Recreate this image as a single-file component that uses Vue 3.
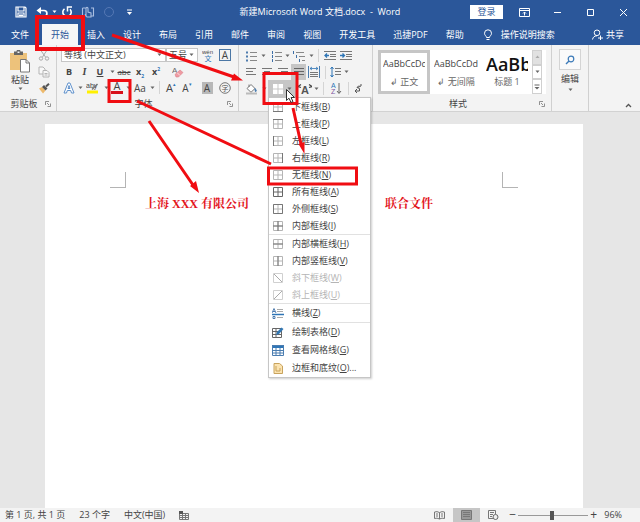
<script setup>
import { h, ref } from 'vue'

const art = {
  save: [12, 12, '<path d="M1 1h9l1 1v9H1zM3 1v4h6V1M3 11V7h6v4" fill="none" stroke="#fff" stroke-width="1.2"/><path d="M4 8.500h4v2H4z" fill="#fff"/>'],
  undo: [12, 12, '<path d="M2 4.500h6a2.800 2.800 0 0 1 0 5.800H6.500" fill="none" stroke="#fff" stroke-width="1.700"/><path d="M0.500 4.500L5 1v7z" fill="#fff"/>'],
  redo: [12, 12, '<path d="M3.500 2.800A4.200 4.200 0 1 0 9 3.200" fill="none" stroke="#fff" stroke-width="1.600"/><path d="M6.500 5.500V1H11" fill="none" stroke="#fff" stroke-width="1.500"/>'],
  touch: [14, 14, '<path d="M1.500 3v8h3M1.500 3h3M10 3h2.500v8H10M5 10V3.500c0-1.500 2-1.500 2 0V7l3 1v4H6L4 9" fill="none" stroke="#a9bee0" stroke-width="1.100"/>'],
  circle: [12, 12, '<circle cx="6" cy="6" r="4.500" fill="none" stroke="#5578b4"/>'],
  qat: [7, 7, '<path d="M1 1h5" stroke="#fff"/><path d="M1 3h5L3.500 6z" fill="#fff"/>'],
  ropts: [11, 9, '<path d="M.5.5h10v8H.5zM.5 2.500h10M5.500 7.500V4M4 5.500L5.500 4 7 5.500" fill="none" stroke="#fff"/>'],
  min: [9, 9, '<path d="M1 4.500h7" stroke="#fff"/>'],
  max: [9, 9, '<path d="M1.500 1.500h6v6h-6z" fill="none" stroke="#fff"/>'],
  close: [9, 9, '<path d="M1 1l7 7M8 1L1 8" stroke="#fff"/>'],
  bulb: [10, 12, '<path d="M3.500 8.500C3.500 7 1.500 6.500 1.500 4.300a3.500 3.500 0 0 1 7 0C8.500 6.500 6.500 7 6.500 8.500zM3.500 10.500h3" fill="none" stroke="#fff"/>'],
  share: [11, 11, '<circle cx="5" cy="3.800" r="2.800" fill="none" stroke="#fff"/><path d="M.5 10.500C1 8 2.500 6.800 5 6.800M6 9h5M8.500 6.500v5" fill="none" stroke="#fff"/>'],
  caret: [5, 4, '<path d="M.5.5h4L2.500 3z" fill="#666"/>'],
  caretw: [5, 4, '<path d="M.5.5h4L2.500 3z" fill="#fff"/>'],
  paste: [22, 23, '<path d="M1 3h17v17H1z" fill="#edc27b"/><path d="M5 1.500h2.500a2 2 0 0 1 4 0H14V5H5z" fill="#666"/><path d="M8.500 1.500h2v1.500h-2z" fill="#f3f3f3"/><path d="M11.500 9.500h5.500l3.500 3.500v9h-9z" fill="#fff" stroke="#777"/><path d="M17 9.500V13h3.500" fill="none" stroke="#777"/>'],
  cut: [12, 11, '<path d="M2.500 0l5 7M9 0L4.500 7" stroke="#aaa" fill="none"/><circle cx="3" cy="8.500" r="1.700" fill="none" stroke="#aaa"/><circle cx="9" cy="8.500" r="1.700" fill="none" stroke="#aaa"/>'],
  copy: [12, 12, '<path d="M1 1h4l2 2v5H1z" fill="#f8f8f8" stroke="#b4b4b4"/><path d="M5 4.500h4l2 2V11H5zM6.500 7.500h3M6.500 9h3" fill="#f8f8f8" stroke="#b4b4b4"/>'],
  brush: [12, 11, '<path d="M1 5.500l3-1.500 3.500 3.500L5 10.500z" fill="#edb96c"/><path d="M4 4l2-2 3.500 3.500-2 2z" fill="#555"/><path d="M8 3.500L11 .8" stroke="#555" stroke-width="2"/>'],
  launcher: [6, 6, '<path d="M.5 4V.5H4M2 2l2 2M5.500 2.500v3h-3" fill="none" stroke="#777" stroke-width=".8"/>'],
  wen: [12, 13, '<text x="0" y="5" font-size="6" font-family="Liberation Sans" fill="#444">wén</text><text x="2.500" y="12" font-size="7" font-family="Noto Sans CJK SC" fill="#2e75b6">文</text>'],
  eraser: [12, 12, '<text x="0" y="7" font-size="8" font-family="Liberation Sans" fill="#666">A</text><path d="M3 8.500L8 4l3 2.500-4.500 4.500H4z" fill="#ef9aa2" stroke="#d9808a" stroke-width=".6"/><path d="M5 6.500l3 3" stroke="#fff" stroke-width=".7"/>'],
  clearA: [12, 12, '<path d="M1 11L5 1h2l4 10H8.500L7.700 8.500H4.300L3.500 11zM5 6.500h2L6 3.500z" fill="#fff" stroke="#4f86c6" stroke-width=".9"/>'],
  marker: [14, 13, '<path d="M1 9.500h11v3H1z" fill="#fff000"/><text x="0" y="7" font-size="7" font-family="Liberation Sans" fill="#444">aby</text><path d="M6 8.500L11.500 3" stroke="#777" stroke-width="1.500"/>'],
  ring: [12, 12, '<circle cx="6" cy="6" r="5.300" fill="none" stroke="#777"/><text x="2.500" y="8.700" font-size="7" font-family="Noto Sans CJK SC" fill="#555">字</text>'],
  bullets: [11, 12, '<path d="M4 2.500h7M4 6.500h7M4 10.500h7" stroke="#888"/><path d="M0 1.500h2v2H0zM0 5.500h2v2H0zM0 9.500h2v2H0z" fill="#4f7cae"/>'],
  numbers: [11, 12, '<path d="M4 2.500h7M4 6.500h7M4 10.500h7" stroke="#888"/><path d="M1.500 1v3M1.500 5v3M1.500 9v3" stroke="#3d6fa8"/>'],
  multi: [12, 12, '<path d="M3 2.500h8M6 6.500h6M9 10.500h3" stroke="#888"/><path d="M.5 1v3M3.500 5v3M6.500 9v3" stroke="#3d6fa8"/>'],
  outdent: [12, 11, '<path d="M0 1.500h12M6 4.500h6M6 6.500h6M0 9.500h12" stroke="#777"/><path d="M5 5.500H1M3 3.500l-2 2 2 2" fill="none" stroke="#2e75b6" stroke-width="1.300"/>'],
  indent: [12, 11, '<path d="M0 1.500h12M6 4.500h6M6 6.500h6M0 9.500h12" stroke="#777"/><path d="M0 5.500h4.500M2.500 3.500l2 2-2 2" fill="none" stroke="#2e75b6" stroke-width="1.300"/>'],
  left: [10, 10, '<path d="M0 1.500h10M0 4.500h7M0 7.500h10" stroke="#777"/>'],
  center: [10, 10, '<path d="M0 1.500h10M2 4.500h6M0 7.500h10" stroke="#777"/>'],
  right: [10, 10, '<path d="M0 1.500h10M3 4.500h7M0 7.500h10" stroke="#777"/>'],
  justify: [10, 10, '<path d="M0 1.500h10M0 4.500h10M0 7.500h10" stroke="#666"/>'],
  spread: [12, 12, '<path d="M.5 0v12M11.500 0v12" stroke="#4b7db0"/><path d="M2 2.500h8M4 1L2 2.500 4 4M8 1l2 1.500L8 4" fill="none" stroke="#2e75b6" stroke-width=".8"/><path d="M2 6.500h8M2 8.500h8M2 10.500h8" stroke="#777"/>'],
  spacing: [11, 12, '<path d="M5 2.500h6M5 5.500h6M5 8.500h6" stroke="#777"/><path d="M2 1v10M.5 3L2 1l1.500 2M.5 9L2 11l1.500-2" fill="none" stroke="#2e75b6"/>'],
  bucket: [13, 12, '<path d="M2 5.500L6 1.500l4 4-4 3.800z" fill="#fff" stroke="#777"/><path d="M4 4V1.500" stroke="#777"/><path d="M10 5.500q2 2 1 3t-1-3z" fill="#2e75b6" stroke="#4b7db0"/><path d="M1 10.500h11" stroke="#bbb" stroke-width="2"/>'],
  tblw: [10, 10, '<path d="M0 0h4.500v4.500H0zM5.500 0H10v4.500H5.500zM0 5.500h4.500V10H0zM5.500 5.500H10V10H5.500z" fill="#fff"/>'],
  cross: [14, 12, '<path d="M0 3.500l3-2M0 3.500l3 1M14 3.500l-3-2M14 3.500l-3 1" stroke="#444" stroke-width="1.200"/><text x="3" y="11" font-size="11" font-weight="bold" font-family="Liberation Sans" fill="#555">A</text>'],
  sort: [11, 13, '<text x="0" y="6" font-size="7" font-family="Liberation Sans" fill="#2e75b6">A</text><text x="0" y="12" font-size="7" font-family="Liberation Sans" fill="#8054a0">Z</text><path d="M8 1v10M6 9l2 2.500L10 9" fill="none" stroke="#666"/>'],
  marks: [8, 11, '<path d="M7 1v2L3.500 4.500M5 2.500L3 4.500 5.500 5.500M5.500 5.500v2.500H1M3 6L1 8l2 2" fill="none" stroke="#555"/>'],
  find: [10, 10, '<circle cx="6" cy="4" r="2.800" fill="none" stroke="#3c7ab8" stroke-width="1.200"/><path d="M4 6L1 9" stroke="#3c7ab8" stroke-width="1.400"/>'],
  up: [7, 5, '<path d="M1 4l2.500-2.500L6 4" fill="none" stroke="#555" stroke-width="1.300"/>'],
  upfaint: [5, 4, '<path d="M.5 3h4L2.500.5z" fill="#aaa"/>'],
  more: [6, 6, '<path d="M.5 1h5" stroke="#666"/><path d="M.5 3h5L3 5.500z" fill="#666"/>'],
  count: [10, 9, '<path d="M.5 2.500h9v6h-9zM1 4.500h8M1 6.500h8M3.500 3v5M6.500 3v5" fill="none" stroke="#777"/><path d="M0 0h4v3H0z" fill="#555"/>'],
  read: [11, 9, '<path d="M.5 1q2.500-1 5 .5Q8 0 10.500 1v6.500q-2.500-1-5 .5-2.500-1.500-5-.5zM5.500 1.500V8M2 3h2M2 5h2M7 3h2M7 5h2" fill="none" stroke="#777"/>'],
  print: [11, 10, '<path d="M.5.5h10v9H.5z" fill="#999" stroke="#777"/><path d="M2 2.500h7M2 4.500h7M2 6.500h7" stroke="#777"/>'],
  web: [11, 10, '<path d="M5 8.500H.5v-8h7V4M2 2.500h4M2 4.500h3M2 6.500h2" fill="none" stroke="#777"/><circle cx="7.500" cy="7" r="2.500" fill="#eee" stroke="#666"/>'],
}

// border icons: light grid with the affected edges drawn darker
const grid = (dark, base = '#b5b5b5') => [10, 10, `<path d="M.5.500h9v9h-9zM5 .5v9M.5 5h9" fill="none" stroke="${base}"/><path d="${dark}" fill="none" stroke="#777"/>`]
Object.assign(art, {
  b: grid('M0 9.500h10'), t: grid('M0 .5h10'), l: grid('M.5 0v10'), r: grid('M9.500 0v10'),
  n: grid(''), a: grid('', '#666'), o: grid('M.5.500h9v9h-9z'), i: grid('M5 0v10M0 5h10'),
  h: grid('M0 5h10'), v: grid('M5 0v10'),
  dd: [10, 10, '<path d="M.5.500h9v9h-9z" fill="none" stroke="#d0d0d0"/><path d="M1 1l8 8" stroke="#aaa"/>'],
  du: [10, 10, '<path d="M.5.500h9v9h-9z" fill="none" stroke="#d0d0d0"/><path d="M9 1L1 9" stroke="#aaa"/>'],
  rule: [12, 11, '<path d="M5 1.500h6M5 3.500h6M5 9.500h6" stroke="#aaa"/><path d="M0 6.500h12" stroke="#2e75b6" stroke-width="1.500"/><path d="M0 5l2-4.500L4 5M1 3.500h2M1 8.500h2v2H1z" fill="none" stroke="#3d6fa8" stroke-width=".9"/>'],
  draw: [12, 11, '<path d="M.5 1.500h9v9h-9zM.5 4.500h9M4 1.500v9M.5 7.500h9" fill="none" stroke="#666"/><path d="M4 8l1-3L9.500.5 11.500 2 7 7z" fill="#3278b5"/>'],
  view: [12, 11, '<path d="M0 0h12v3H0z" fill="#2e75b6"/><path d="M.5.500h11v10H.5zM4 3v8M8 3v8M1 5.500h10M1 8h10" fill="none" stroke="#4b7db0"/>'],
  shade: [10, 11, '<path d="M1 .5h5.500L9.500 3v7.500H1z" fill="#fbe3b0" stroke="#c8a35d"/><path d="M3 3v5h4V5" fill="none" stroke="#c8a35d"/>'],
})

const Icon = ({ name }) => {
  const [w, t, body] = art[name]
  return h('svg', { width: w, height: t, viewBox: `0 0 ${w} ${t}`, 'aria-hidden': 'true', innerHTML: body })
}

const tabs = ['文件', '开始', '插入', '设计', '布局', '引用', '邮件', '审阅', '视图', '开发工具', '迅捷PDF', '帮助']
const active = ref('开始')
const zoom = ref(48)

const menu = [
  [['b', '下框线', 'B'], ['t', '上框线', 'P'], ['l', '左框线', 'L'], ['r', '右框线', 'R'], ['n', '无框线', 'N'], ['a', '所有框线', 'A'], ['o', '外侧框线', 'S'], ['i', '内部框线', 'I']],
  [['h', '内部横框线', 'H'], ['v', '内部竖框线', 'V'], ['dd', '斜下框线', 'W'], ['du', '斜上框线', 'U']],
  [['rule', '横线', 'Z']],
  [['draw', '绘制表格', 'D'], ['view', '查看网格线', 'G'], ['shade', '边框和底纹', 'O', '...']],
]
</script>

<template>
  <div class="window">
    <header class="titlebar">
      <div class="quick">
        <button aria-label="保存"><Icon name="save" /></button>
        <button aria-label="撤销"><Icon name="undo" /></button>
        <button class="slim" aria-label="撤销选项"><Icon name="caretw" /></button>
        <button aria-label="重复"><Icon name="redo" /></button>
        <button aria-label="触摸"><Icon name="touch" /></button>
        <button aria-label="录制"><Icon name="circle" /></button>
        <button aria-label="自定义"><Icon name="qat" /></button>
      </div>
      <h1>新建Microsoft Word 文档.docx&nbsp; -&nbsp; Word</h1>
      <div class="controls">
        <button class="login">登录</button>
        <button class="win" aria-label="功能区选项"><Icon name="ropts" /></button>
        <button class="win" aria-label="最小化"><Icon name="min" /></button>
        <button class="win" aria-label="最大化"><Icon name="max" /></button>
        <button class="win" aria-label="关闭"><Icon name="close" /></button>
      </div>
    </header>

    <nav class="tabs">
      <button v-for="t in tabs" :key="t" class="tab" :class="{ on: t === active }" @click="active = t">{{ t }}</button>
      <button class="tell"><Icon name="bulb" />操作说明搜索</button>
      <button class="share"><Icon name="share" />共享</button>
    </nav>

    <section class="ribbon">
      <div class="group clipboard">
        <div class="clip">
          <button class="paste"><Icon name="paste" /><span>粘贴</span><Icon name="caret" /></button>
          <div class="clipside">
            <button aria-label="剪切"><Icon name="cut" /></button>
            <button aria-label="复制"><Icon name="copy" /></button>
            <button aria-label="格式刷"><Icon name="brush" /></button>
          </div>
        </div>
        <footer><span>剪贴板</span><button aria-label="剪贴板设置"><Icon name="launcher" /></button></footer>
      </div>

      <div class="group fontgroup">
        <div class="row f1">
          <span class="combo"><select aria-label="字体"><option>等线 (中文正文)</option></select><Icon name="caret" /></span>
          <span class="combo"><select aria-label="字号"><option>五号</option></select><Icon name="caret" /></span>
          <button aria-label="拼音"><Icon name="wen" /></button>
          <button class="boxed">A</button>
        </div>
        <div class="row f2">
          <button class="bold">B</button><button class="ital">I</button><button class="und">U</button>
          <button aria-label="下划线选项"><Icon name="caret" /></button>
          <button class="strike">abc</button>
          <button class="script">x<sub>2</sub></button><button class="script">x<sup>2</sup></button>
          <button aria-label="清除格式"><Icon name="eraser" /></button>
        </div>
        <div class="row f3">
          <button aria-label="文本效果"><Icon name="clearA" /></button><Icon name="caret" />
          <button aria-label="突出显示"><Icon name="marker" /></button><Icon name="caret" />
          <button class="color">A</button><Icon name="caret" />
          <button class="case">Aa</button><Icon name="caret" />
          <i class="bar"></i>
          <button class="size grow">A<sup>▴</sup></button><button class="size">A<sup>▾</sup></button>
          <button class="shaded">A</button>
          <button aria-label="带圈字符"><Icon name="ring" /></button>
        </div>
        <footer><span>字体</span><button aria-label="字体设置"><Icon name="launcher" /></button></footer>
      </div>

      <div class="group para">
        <div class="row p1">
          <button aria-label="项目符号"><Icon name="bullets" /></button><Icon name="caret" />
          <button aria-label="编号"><Icon name="numbers" /></button><Icon name="caret" />
          <button aria-label="多级列表"><Icon name="multi" /></button><Icon name="caret" />
          <i class="bar"></i>
          <button aria-label="减少缩进"><Icon name="outdent" /></button>
          <button aria-label="增加缩进"><Icon name="indent" /></button>
        </div>
        <div class="row p2">
          <button aria-label="左对齐"><Icon name="left" /></button>
          <button aria-label="居中"><Icon name="center" /></button>
          <button aria-label="右对齐"><Icon name="right" /></button>
          <button class="pressed" aria-label="两端对齐"><Icon name="justify" /></button>
          <button aria-label="分散对齐"><Icon name="spread" /></button>
          <i class="bar"></i>
          <button aria-label="行距"><Icon name="spacing" /></button><Icon name="caret" />
        </div>
        <div class="row p3">
          <button aria-label="底纹"><Icon name="bucket" /></button><Icon name="caret" />
          <div class="borders">
            <button class="pressed" aria-label="边框"><Icon name="tblw" /><Icon name="caret" /></button>
            <div class="menu">
              <div v-for="(section, s) in menu" :key="s" class="section" :class="{ tall: s > 1, inset: s === 3 }">
                <button v-for="m in section" :key="m[0]" :disabled="m[0] === 'dd' || m[0] === 'du'">
                  <span class="mi"><Icon :name="m[0]" /></span><span>{{ m[1] }}(<u>{{ m[2] }}</u>){{ m[3] }}</span>
                </button>
              </div>
            </div>
          </div>
          <button aria-label="中文版式"><Icon name="cross" /></button><Icon name="caret" />
          <i class="bar"></i>
          <button aria-label="排序"><Icon name="sort" /></button>
          <i class="bar"></i>
          <button aria-label="显示标记"><Icon name="marks" /></button>
        </div>
      </div>

      <div class="group styles">
        <div class="gallery">
          <button class="card chosen"><span class="sample">AaBbCcDd</span><span class="name">↲ 正文</span></button>
          <button class="card"><span class="sample">AaBbCcDd</span><span class="name">↲ 无间隔</span></button>
          <button class="card"><span class="sample big">AaBb</span><span class="name">标题 1</span></button>
          <div class="scroll">
            <button class="off" aria-label="上一行"><Icon name="upfaint" /></button>
            <button aria-label="下一行"><Icon name="caret" /></button>
            <button aria-label="更多"><Icon name="more" /></button>
          </div>
        </div>
        <footer><span>样式</span><button aria-label="样式设置"><Icon name="launcher" /></button></footer>
      </div>

      <div class="group editing">
        <button class="edit"><span class="lens"><Icon name="find" /></span><span>编辑</span><Icon name="caret" /></button>
      </div>
      <button class="collapse" aria-label="折叠功能区"><Icon name="up" /></button>
    </section>

    <main class="workspace">
      <article class="page">
        <div class="corners"><i class="corner"></i><i class="corner flip"></i></div>
        <p class="line"><span>上海 XXX 有限公司</span><span>联合文件</span></p>
      </article>
    </main>

    <footer class="status">
      <span>第 1 页, 共 1 页</span><span>23 个字</span><span>中文(中国)</span>
      <button class="rec" aria-label="宏"><Icon name="count" /></button>
      <div class="views">
        <button aria-label="阅读视图"><Icon name="read" /></button>
        <button class="pressed" aria-label="页面视图"><Icon name="print" /></button>
        <button aria-label="Web 版式"><Icon name="web" /></button>
      </div>
      <button class="step">−</button>
      <input v-model="zoom" type="range" min="0" max="100" aria-label="缩放">
      <button class="step">+</button>
      <span class="pct">96%</span>
    </footer>

    <svg class="notes" width="640" height="522" viewBox="0 0 640 522" aria-hidden="true">
      <g fill="none" stroke="#f00d12" stroke-width="3">
        <path d="M37 17h46v32H37z" stroke-width="4" />
        <path d="M109 80.500h21v21h-21z" />
        <path d="M264 73.500h33v30h-33z" />
        <path d="M268.500 168h88v16h-88z" />
        <path d="M112 35l122 42M137 101l134 63M149 121l44 64M293 108l8 36" />
      </g>
      <path d="M243 80.500l-12 0 3-7zM199 193l-9-7 6-5zM304.500 154l-6-10 6-2z" fill="#f00d12" />
      <path d="M286.500 89.500v11l2.500-2.300 2 4.300 2-1-2-4h3.500z" fill="#fff" stroke="#333" />
    </svg>
  </div>
</template>

<style>
body {
  margin: 0;
}
</style>

<style scoped>
.window {
  position: relative;
  display: flex;
  flex-direction: column;
  min-height: 100vh;
  overflow: hidden;
  font: 9px/12px "Open Sans", "Noto Sans CJK SC", sans-serif;
  color: #444;
  background: #e6e6e6;
}
.window :deep(svg) {
  display: block;
  flex: none;
}
button {
  display: flex;
  align-items: center;
  justify-content: center;
  margin: 0;
  padding: 0;
  border: 0;
  background: none;
  font: inherit;
  color: inherit;
  white-space: nowrap;
}
.titlebar {
  display: grid;
  grid-template-columns: 1fr auto 1fr;
  align-items: center;
  height: 24px;
  background: #2b579a;
  color: #fff;
}
.quick {
  display: flex;
  align-items: center;
  padding-left: 10px;
}
.quick button {
  width: 21px;
}
.quick .slim {
  width: 4px;
}
h1 {
  margin: 0;
  font-size: 9px;
  font-weight: 400;
}
.controls {
  display: flex;
  align-items: center;
  justify-content: flex-end;
}
.login {
  width: 33px;
  height: 14px;
  margin-right: 5px;
  background: #fff;
  color: #2b579a;
}
.win {
  width: 33px;
  height: 22px;
}
.tabs {
  display: flex;
  height: 21px;
  background: #2b579a;
  color: #fff;
}
.tab {
  padding: 0 9px;
}
.tab:first-child {
  padding: 0 13px 0 11px;
}
.tab.on {
  background: #f6f6f6;
  color: #2b579a;
}
.tell {
  gap: 8px;
  padding-left: 10px;
}
.share {
  gap: 3px;
  margin-left: auto;
  padding-right: 16px;
}
.ribbon {
  display: flex;
  height: 67px;
  background: #f3f3f3;
  border-bottom: 1px solid #d2d2d2;
  box-sizing: border-box;
}
.group {
  display: flex;
  flex-direction: column;
  box-sizing: border-box;
  padding: 2px 4px 0;
  border-right: 1px solid #d0d0d0;
  flex: none;
}
.group footer {
  display: grid;
  grid-template-columns: 1fr 8px;
  align-items: center;
  height: 15px;
  text-align: center;
}
.clipboard {
  width: 57px;
}
.clip {
  display: flex;
  height: 50px;
}
.paste {
  flex-direction: column;
  justify-content: flex-start;
  gap: 1px;
  width: 32px;
  padding-top: 3px;
}
.clipside {
  display: grid;
  grid-template-rows: 17px 16px 17px;
  width: 16px;
}
.row {
  display: grid;
  align-items: center;
  justify-items: center;
  height: 17px;
}
.row button {
  height: 100%;
}
.fontgroup {
  width: 182px;
}
.f1 {
  grid-template-columns: 105px 32px 20px 14px;
}
.f2 {
  grid-template-columns: 16px 15px 16px 8px 16px 16px 16px 28px;
  height: 16px;
}
.f3 {
  grid-template-columns: 16px 6px 20px 6px 16px 6px 18px 6px 8px 16px 16px 24px 12px;
}
.combo {
  display: flex;
  align-items: center;
  box-sizing: border-box;
  width: 100%;
  height: 14px;
  padding-right: 3px;
  border: 1px solid #c6c6c6;
  background: #fff;
}
.combo select {
  flex: 1;
  min-width: 0;
  height: 12px;
  padding: 0 2px;
  border: 0;
  appearance: none;
  background: none;
  font: inherit;
  line-height: 12px;
  color: #444;
}
.row .boxed {
  width: 12px;
  height: 12px;
  border: 1px solid #4c77a5;
  font-size: 10px;
}
.bold {
  font-weight: 700;
}
.ital {
  font: italic 700 10px "Liberation Serif", serif;
}
.und {
  font-weight: 700;
  text-decoration: underline;
}
.strike {
  font-size: 8px;
  text-decoration: line-through;
}
.script {
  font-weight: 700;
}
.script sub,
.script sup,
.size sup {
  font-size: 5px;
  line-height: 5px;
  color: #2e75b6;
}
.script sub {
  align-self: flex-end;
}
.script sup,
.size sup {
  align-self: flex-start;
  padding-top: 3px;
}
.row .color {
  width: 12px;
  height: 13px;
  border-bottom: 3px solid #d8101a;
  box-sizing: border-box;
  font-size: 11px;
}
.case,
.size {
  font-size: 10px;
}
.grow {
  font-size: 11px;
}
.row .shaded {
  width: 11px;
  height: 12px;
  background: #b8b8b8;
  font-size: 10px;
}
.bar {
  width: 1px;
  height: 13px;
  background: #d4d4d4;
}
.para {
  width: 134px;
}
.p1 {
  grid-template-columns: 17px 7px 18px 5px 18px 6px 8px 16px 15px;
}
.p2 {
  grid-template-columns: 16px 16px 16px 15px 16px 6px 14px 8px;
  height: 16px;
}
.p3 {
  grid-template-columns: 17px 8px 28px 18px 5px 8px 18px 7px 12px;
}
.pressed {
  width: 100%;
  background: #c6c6c6;
}
.borders {
  position: relative;
  width: 100%;
  height: 17px;
}
.borders > button {
  gap: 4px;
}
.menu {
  position: absolute;
  z-index: 2;
  top: 17px;
  left: 0;
  width: 103px;
  box-sizing: border-box;
  border: 1px solid #c6c6c6;
  background: #fff;
  box-shadow: 1px 1px 2px #0003;
}
.menu .section + .section {
  border-top: 1px solid #e1e1e1;
}
.menu .section.inset {
  border-top-color: transparent;
  background: linear-gradient(#e1e1e1, #e1e1e1) 23px 0 / 100% 1px no-repeat border-box;
}
.menu button {
  justify-content: flex-start;
  width: 100%;
  height: 17px;
}
.menu .tall button {
  height: 18px;
}
.menu button:disabled {
  color: #b5b5b5;
}
.mi {
  display: flex;
  justify-content: center;
  width: 17px;
  margin-right: 6px;
}
.styles {
  width: 179px;
  padding: 2px 5px 0;
}
.gallery {
  display: grid;
  grid-template-columns: 52px 52px 50px 10px;
  height: 44px;
  margin: 3px 0;
  background: #fff;
}
.card {
  flex-direction: column;
  gap: 4px;
  min-width: 0;
  box-sizing: border-box;
  padding: 0 4px;
}
.chosen {
  padding: 0 2px;
  border: 3px solid #c6c6c6;
}
.sample {
  width: 100%;
  height: 16px;
  overflow: hidden;
  line-height: 16px;
  text-align: left;
  color: #444;
}
.big {
  font-size: 18px;
  font-weight: 600;
  color: #111;
}
.name {
  color: #666;
}
.scroll {
  display: grid;
  grid-template-rows: 1fr 1fr 1fr;
}
.scroll button {
  border: 1px solid #d0d0d0;
}
.scroll .off {
  background: #e1e1e1;
}
.styles footer {
  margin-top: -1px;
}
.editing {
  width: 37px;
}
.edit {
  flex-direction: column;
  gap: 3px;
  padding-top: 2px;
}
.lens {
  display: flex;
  align-items: center;
  justify-content: center;
  width: 20px;
  height: 19px;
  border: 1px solid #d4d4d4;
  background: #fafafa;
}
.collapse {
  align-self: flex-end;
  margin-left: auto;
  padding: 0 8px 3px;
}
.workspace {
  display: flex;
  flex: 1;
  padding: 12px 57px 0 45px;
}
.page {
  flex: 1;
  background: #fff;
}
.corners {
  display: flex;
  justify-content: space-between;
  padding: 48px 65px 0;
}
.corner {
  width: 15px;
  height: 15px;
  border: solid #b4b4b4;
  border-width: 0 1px 1px 0;
}
.flip {
  border-width: 0 0 1px 1px;
}
.line {
  display: flex;
  gap: 136px;
  margin: 8px 0 0;
  padding-left: 100px;
  font: 700 12px/16px "Liberation Serif", "Noto Serif CJK SC", "Noto Sans CJK SC", serif;
  color: #e3141c;
  white-space: nowrap;
}
.status {
  display: flex;
  align-items: center;
  gap: 14px;
  height: 14px;
  padding: 0 18px 0 5px;
  background: #f3f3f3;
  white-space: nowrap;
}
.views {
  display: flex;
  height: 14px;
  margin-left: auto;
  margin-right: -14px;
}
.views button {
  width: 27px;
}
.step {
  width: 11px;
  margin-right: -14px;
  font-size: 12px;
}
.status input {
  width: 70px;
  height: 10px;
  margin: 0 -14px 0 0;
  appearance: none;
  background: linear-gradient(#999, #999) center / 100% 1px no-repeat;
}
.status input + .step {
  margin-right: -9px;
}
.status input::-webkit-slider-thumb {
  appearance: none;
  width: 4px;
  height: 9px;
  background: #555;
}
.notes {
  position: absolute;
  z-index: 5;
  top: 0;
  left: 0;
  pointer-events: none;
}
</style>
